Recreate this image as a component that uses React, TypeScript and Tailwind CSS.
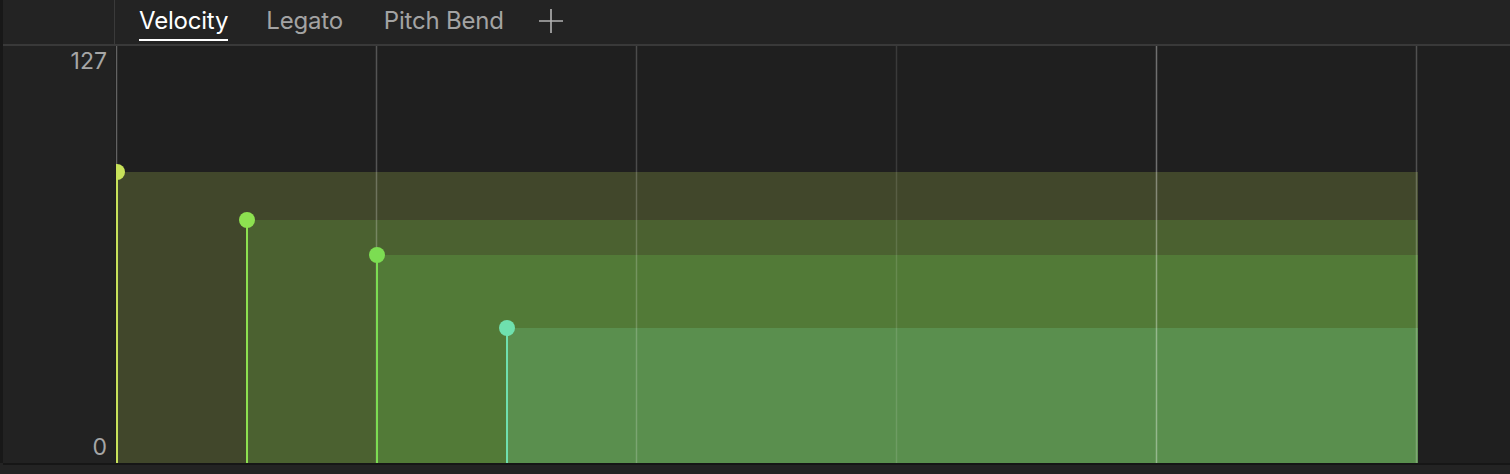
type Note = {
    x: number;
    top: number;
    fill: string;
    stem: string;
};

// plot coords are local to the svg, which starts at page x=115, y=46
const notes: Note[] = [
    { x: 2, top: 126, fill: "#41472b", stem: "#c8e25a" },
    { x: 132, top: 174, fill: "#4b6130", stem: "#8de150" },
    { x: 262, top: 209, fill: "#527a37", stem: "#7cdd52" },
    { x: 392, top: 282, fill: "#5a8f4e", stem: "#6fe0ae" },
];

const gridLines = [
    { x: 1.5, o: 0.3 },
    { x: 261.5, o: 0.24 },
    { x: 521.5, o: 0.2 },
    { x: 781.5, o: 0.12 },
    { x: 1041.5, o: 0.36 },
    { x: 1301.5, o: 0.22 },
];

const PLOT_H = 417;
const BAR_RIGHT = 1303;

function Tab({ label, active }: { label: string; active?: boolean }) {
    return (
        <div className="relative flex h-full items-center pb-[2px]">
            <span className={active ? "text-white" : "text-[#a3a3a3]"}>{label}</span>
            {active && <div className="absolute bottom-[3px] left-0 right-0 h-[2px] bg-white" />}
        </div>
    );
}

function Plot() {
    return (
        <svg width="1395" height={PLOT_H} className="block">
            <defs>
                <clipPath id="plot-clip">
                    <rect x="1" y="0" width="1394" height={PLOT_H} />
                </clipPath>
            </defs>
            <g clipPath="url(#plot-clip)">
                {/* velocity bars */}
                {notes.map((n, i) => (
                    <rect key={i} x={n.x - 1} y={n.top} width={BAR_RIGHT - n.x + 1} height={PLOT_H - n.top} fill={n.fill} />
                ))}

                {/* beat lines */}
                {gridLines.map((g, i) => (
                    <line key={i} x1={g.x} x2={g.x} y1="0" y2={PLOT_H} stroke="#ffffff" strokeOpacity={g.o} strokeWidth="1.5" />
                ))}

                {/* stems + handles */}
                {notes.map((n, i) => (
                    <g key={i}>
                        <line x1={n.x} x2={n.x} y1={n.top} y2={PLOT_H} stroke={n.stem} strokeWidth="2" />
                        <circle cx={n.x} cy={n.top} r="8" fill={n.stem} />
                    </g>
                ))}
            </g>
        </svg>
    );
}

export default function App() {
    return (
        <div className="flex h-[474px] w-[1510px] overflow-hidden bg-[#232323] font-['Inter',sans-serif]">
            <div className="h-[463px] w-[3px] shrink-0 bg-[#181818]" />

            <div className="flex flex-1 flex-col">
                {/* tabs */}
                <div className="flex h-[46px] shrink-0 border-b-2 border-[#393939]">
                    <div className="w-[112px] shrink-0 border-r border-[#3a3a3a]" />
                    <div className="flex items-center pl-[24px] text-[24px] tracking-[-0.2px]">
                        <Tab label="Velocity" active />
                        <div className="ml-[38px]"><Tab label="Legato" /></div>
                        <div className="ml-[41px]"><Tab label="Pitch Bend" /></div>
                        <svg width="24" height="24" viewBox="0 0 24 24" className="mb-[2px] ml-[35px] text-[#b3b3b3]">
                            <path d="M12 0v24M0 12h24" stroke="currentColor" strokeWidth="1.6" fill="none" />
                        </svg>
                    </div>
                </div>

                {/* lane */}
                <div className="flex h-[417px] shrink-0">
                    <div className="flex w-[112px] shrink-0 flex-col justify-between bg-[#222222] pb-[2px] pr-[8px] pt-[1px] text-right text-[23px] leading-[28px] text-[#a6a6a6]">
                        <span>127</span>
                        <span>0</span>
                    </div>
                    <div className="flex-1 bg-[#1f1f1f]">
                        <Plot />
                    </div>
                </div>

                <div className="h-[2px] bg-[#161616]" />
            </div>
        </div>
    );
}
